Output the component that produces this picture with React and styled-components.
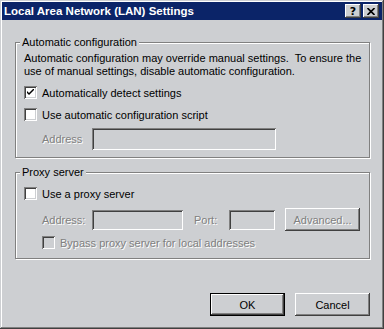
import styled, { createGlobalStyle, css } from 'styled-components';

const face = '#cdcfd2';
const shadow = '#808080';
const dark = '#404040';

const GlobalStyle = createGlobalStyle`
  body {
    margin: 0;
    background: ${face};
    font-family: "Liberation Sans", Arial, sans-serif;
    font-size: 11px;
    color: #000;
  }
`;

const Window = styled.div`
  width: 384px;
  height: 329px;
  box-sizing: border-box;
  padding: 2px;
  background: ${face};
  box-shadow: inset -1px -1px ${dark}, inset 1px 1px ${face},
    inset -2px -2px ${shadow}, inset 2px 2px #fff;
  display: flex;
  flex-direction: column;
`;

const TitleBar = styled.div`
  height: 18px;
  background: #0b2468;
  display: flex;
  align-items: center;
  padding: 0 3px 0 2px;
  color: #fff;
  font-weight: bold;
  font-size: 11.5px;
`;

const Title = styled.span`
  flex: 1;
`;

const raised = css`
  background: ${face};
  box-shadow: inset -1px -1px ${dark}, inset 1px 1px #fff,
    inset -2px -2px ${shadow}, inset 2px 2px ${face};
`;

const sunken = css`
  box-shadow: inset 1px 1px ${shadow}, inset -1px -1px #fff,
    inset 2px 2px ${dark}, inset -2px -2px ${face};
`;

const CaptionButton = styled.div`
  ${raised};
  width: 16px;
  height: 14px;
  margin-left: ${(p) => (p.$gap ? '2px' : '0')};
  display: flex;
  align-items: center;
  justify-content: center;
  color: #000;
  font-size: 11px;
  font-weight: bold;
  font-family: "DejaVu Sans", sans-serif;
`;

const Body = styled.div`
  padding: 16px 12px 0 13px;
  display: flex;
  flex-direction: column;
`;

const Group = styled.fieldset`
  margin: ${(p) => (p.$first ? '0' : '8px 0 0')};
  padding: 0 8px 7px 8px;
  border: 1px solid ${shadow};
  box-shadow: 1px 1px 0 #fff, inset 1px 1px 0 #fff;
  min-width: 0;
`;

const Legend = styled.legend`
  margin-left: -4px;
  padding: 0 2px;
  line-height: 13px;
  background: ${face};
`;

const Para = styled.p`
  margin: 3px 0 0;
  line-height: 13px;
  white-space: pre;
`;

const Row = styled.div`
  display: flex;
  align-items: center;
  height: ${(p) => p.$h || 17}px;
  margin-top: ${(p) => p.$mt ?? 5}px;
  padding-left: ${(p) => (p.$indent ? 18 : 0)}px;
  gap: 5px;
`;

const FieldRow = styled.div`
  display: flex;
  align-items: center;
  height: ${(p) => p.$h || 22}px;
  margin-top: ${(p) => p.$mt ?? 5}px;
  padding-left: 18px;
`;

const Box = styled.span`
  width: 13px;
  height: 13px;
  flex: none;
  box-sizing: border-box;
  background: ${(p) => (p.$disabled ? face : '#fff')};
  ${sunken};
  display: flex;
  align-items: center;
  justify-content: center;
`;

const Label = styled.span`
  white-space: nowrap;
  ${(p) =>
    p.$disabled &&
    css`
      color: ${shadow};
      text-shadow: 1px 1px 0 #fff;
    `}
`;

const FieldLabel = styled(Label)`
  width: ${(p) => p.$w}px;
  margin-left: ${(p) => p.$ml || 0}px;
  flex: none;
`;

const Input = styled.div`
  width: ${(p) => p.$w}px;
  height: ${(p) => p.$h || 21}px;
  flex: none;
  background: ${face};
  ${sunken};
`;

const Button = styled.div`
  ${raised};
  width: 75px;
  height: 23px;
  margin-left: ${(p) => p.$ml || 0}px;
  box-sizing: border-box;
  flex: none;
  display: flex;
  align-items: center;
  justify-content: center;
  ${(p) =>
    p.$default &&
    css`
      box-shadow: inset 0 0 0 1px #000, inset -2px -2px ${dark},
        inset 2px 2px #fff, inset -3px -3px ${shadow};
    `}
  ${(p) =>
    p.$disabled &&
    css`
      color: ${shadow};
      text-shadow: 1px 1px 0 #fff;
    `}
`;

const Footer = styled.div`
  display: flex;
  justify-content: flex-end;
  gap: 10px;
  margin-top: 34px;
`;

const Checkbox = ({ checked, disabled, children }) => (
  <>
    <Box $disabled={disabled}>
      {checked && (
        <svg width="7" height="7" viewBox="0 0 7 7">
          <path d="M0 2 L0 4 L2 6 L7 1 L7 -1 L2 4 Z" fill="#000" />
        </svg>
      )}
    </Box>
    <Label $disabled={disabled}>{children}</Label>
  </>
);

export default function App() {
  return (
    <>
      <GlobalStyle />
      <Window>
        <TitleBar>
          <Title>Local Area Network (LAN) Settings</Title>
          <CaptionButton>?</CaptionButton>
          <CaptionButton $gap>
            <svg width="8" height="7" viewBox="0 0 8 7">
              <path d="M0.5 0 L7.5 7 M7.5 0 L0.5 7" stroke="#000" strokeWidth="1.6" />
            </svg>
          </CaptionButton>
        </TitleBar>
        <Body>
          <Group $first>
            <Legend>Automatic configuration</Legend>
            <Para>
              {'Automatic configuration may override manual settings.  To ensure the'}
              <br />
              use of manual settings, disable automatic configuration.
            </Para>
            <Row $mt={6}>
              <Checkbox checked>Automatically detect settings</Checkbox>
            </Row>
            <Row>
              <Checkbox>Use automatic configuration script</Checkbox>
            </Row>
            <FieldRow $mt={5}>
              <FieldLabel $w={50} $disabled>Address</FieldLabel>
              <Input $w={184} $h={22} />
            </FieldRow>
          </Group>
          <Group>
            <Legend>Proxy server</Legend>
            <Row $mt={6}>
              <Checkbox>Use a proxy server</Checkbox>
            </Row>
            <FieldRow $h={23} $mt={6}>
              <FieldLabel $w={50} $disabled>Address:</FieldLabel>
              <Input $w={91} $h={20} />
              <FieldLabel $w={35} $ml={11} $disabled>Port:</FieldLabel>
              <Input $w={46} $h={20} />
              <Button $ml={10} $disabled>Advanced...</Button>
            </FieldRow>
            <Row $indent $mt={3}>
              <Checkbox disabled>Bypass proxy server for local addresses</Checkbox>
            </Row>
          </Group>
          <Footer>
            <Button $default>OK</Button>
            <Button>Cancel</Button>
          </Footer>
        </Body>
      </Window>
    </>
  );
}
